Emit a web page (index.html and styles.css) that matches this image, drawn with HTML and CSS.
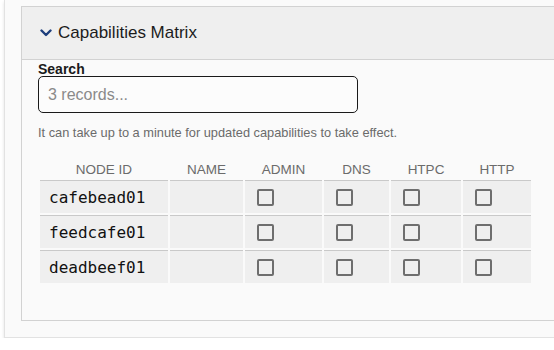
FILE: index.html
```html
<!DOCTYPE html>
<html lang="en">
<head>
    <meta charset="UTF-8">
    <meta name="viewport" content="width=device-width, initial-scale=1.0">
    <title>Capabilities Matrix</title>
    <link rel="stylesheet" href="styles.css">
</head>
<body>

    <div class="card">
        <div class="panel">
            <div class="panel-header">
                <svg class="chevron" width="12" height="8" viewBox="0 0 12 8">
                    <polyline points="1.5,1.5 6,6 10.5,1.5" fill="none" stroke="#1e3f7d" stroke-width="2.4" stroke-linecap="round" stroke-linejoin="round"/>
                </svg>
                <span class="panel-title">Capabilities Matrix</span>
            </div>

            <div class="panel-body">
                <label class="search-label" for="searchInput">Search</label>
                <input type="text" id="searchInput" class="search-input" placeholder="3 records...">
                <p class="hint">It can take up to a minute for updated capabilities to take effect.</p>

                <!-- capability table -->
                <table class="matrix">
                    <thead>
                        <tr>
                            <th class="col-id">NODE ID</th>
                            <th class="col-name">NAME</th>
                            <th class="col-admin">ADMIN</th>
                            <th class="col-dns">DNS</th>
                            <th class="col-htpc">HTPC</th>
                            <th class="col-http">HTTP</th>
                        </tr>
                    </thead>
                    <tbody>
                        <tr>
                            <td class="node-id">cafebead01</td>
                            <td></td>
                            <td><input type="checkbox" class="cap"></td>
                            <td><input type="checkbox" class="cap"></td>
                            <td><input type="checkbox" class="cap"></td>
                            <td><input type="checkbox" class="cap"></td>
                        </tr>
                        <tr>
                            <td class="node-id">feedcafe01</td>
                            <td></td>
                            <td><input type="checkbox" class="cap"></td>
                            <td><input type="checkbox" class="cap"></td>
                            <td><input type="checkbox" class="cap"></td>
                            <td><input type="checkbox" class="cap"></td>
                        </tr>
                        <tr>
                            <td class="node-id">deadbeef01</td>
                            <td></td>
                            <td><input type="checkbox" class="cap"></td>
                            <td><input type="checkbox" class="cap"></td>
                            <td><input type="checkbox" class="cap"></td>
                            <td><input type="checkbox" class="cap"></td>
                        </tr>
                    </tbody>
                </table>
            </div>
        </div>
    </div>

</body>
</html>
```

FILE: styles.css
```css
body {
    font-family: "Liberation Sans", Arial, sans-serif;
    background-color: #ffffff;
    margin: 0;
    overflow: hidden;
}

.card {
    background: #fafafa;
    margin: 0 -40px 0 4px;
    padding: 6px 0 16px 16px;
    border: 1px solid #e2e2e2;
    border-top: none;
    box-shadow: 0 2px 3px rgba(0, 0, 0, 0.12);
}

.panel {
    border: 1px solid #d2d2d2;
    border-right: none;
    height: 315px;
    box-sizing: border-box;
}

.panel-header {
    display: flex;
    align-items: center;
    height: 52px;
    padding-left: 18px;
    background-color: #efefef;
    border-bottom: 1px solid #d2d2d2;
}

.chevron {
    margin-right: 6px;
}

.panel-title {
    font-size: 17px;
    color: #1c1c1c;
}

.panel-body {
    padding: 2px 0 0 16px;
}

.search-label {
    display: block;
    font-size: 14px;
    font-weight: bold;
    line-height: 14px;
    color: #1a1a1a;
}

.search-input {
    display: block;
    width: 320px;
    height: 37px;
    box-sizing: border-box;
    margin: 0;
    padding: 0 9px;
    border: 1.5px solid #1a1a1a;
    border-radius: 5px;
    background: #fcfcfc;
    font-family: inherit;
    font-size: 16px;
}

.search-input::placeholder {
    color: #8a8a8a;
}

.hint {
    margin: 12px 0 0 0;
    font-size: 12.8px;
    line-height: 16px;
    color: #6b6b6b;
}

.matrix {
    margin-top: 17px;
    border-spacing: 2px;
}

.matrix th {
    height: 18px;
    padding: 0;
    font-size: 13.5px;
    font-weight: normal;
    color: #6b6b6b;
    text-align: center;
}

.col-id { width: 128px; }
.col-name { width: 73px; }
.col-admin { width: 77px; }
.col-dns { width: 65px; }
.col-htpc { width: 70px; }
.col-http { width: 68px; }

.matrix td {
    height: 32px;
    padding: 0 0 0 12px;
    background-color: #efefef;
    border-top: 1px solid #c9c9c9;
    vertical-align: middle;
}

.matrix td.node-id {
    padding-left: 9px;
    font-family: "DejaVu Sans Mono", monospace;
    font-size: 16px;
    color: #111;
}

.cap {
    appearance: none;
    -webkit-appearance: none;
    display: block;
    width: 17px;
    height: 17px;
    margin: 0;
    border: 2px solid #6e6e6e;
    border-radius: 2px;
    background: transparent;
}
```
